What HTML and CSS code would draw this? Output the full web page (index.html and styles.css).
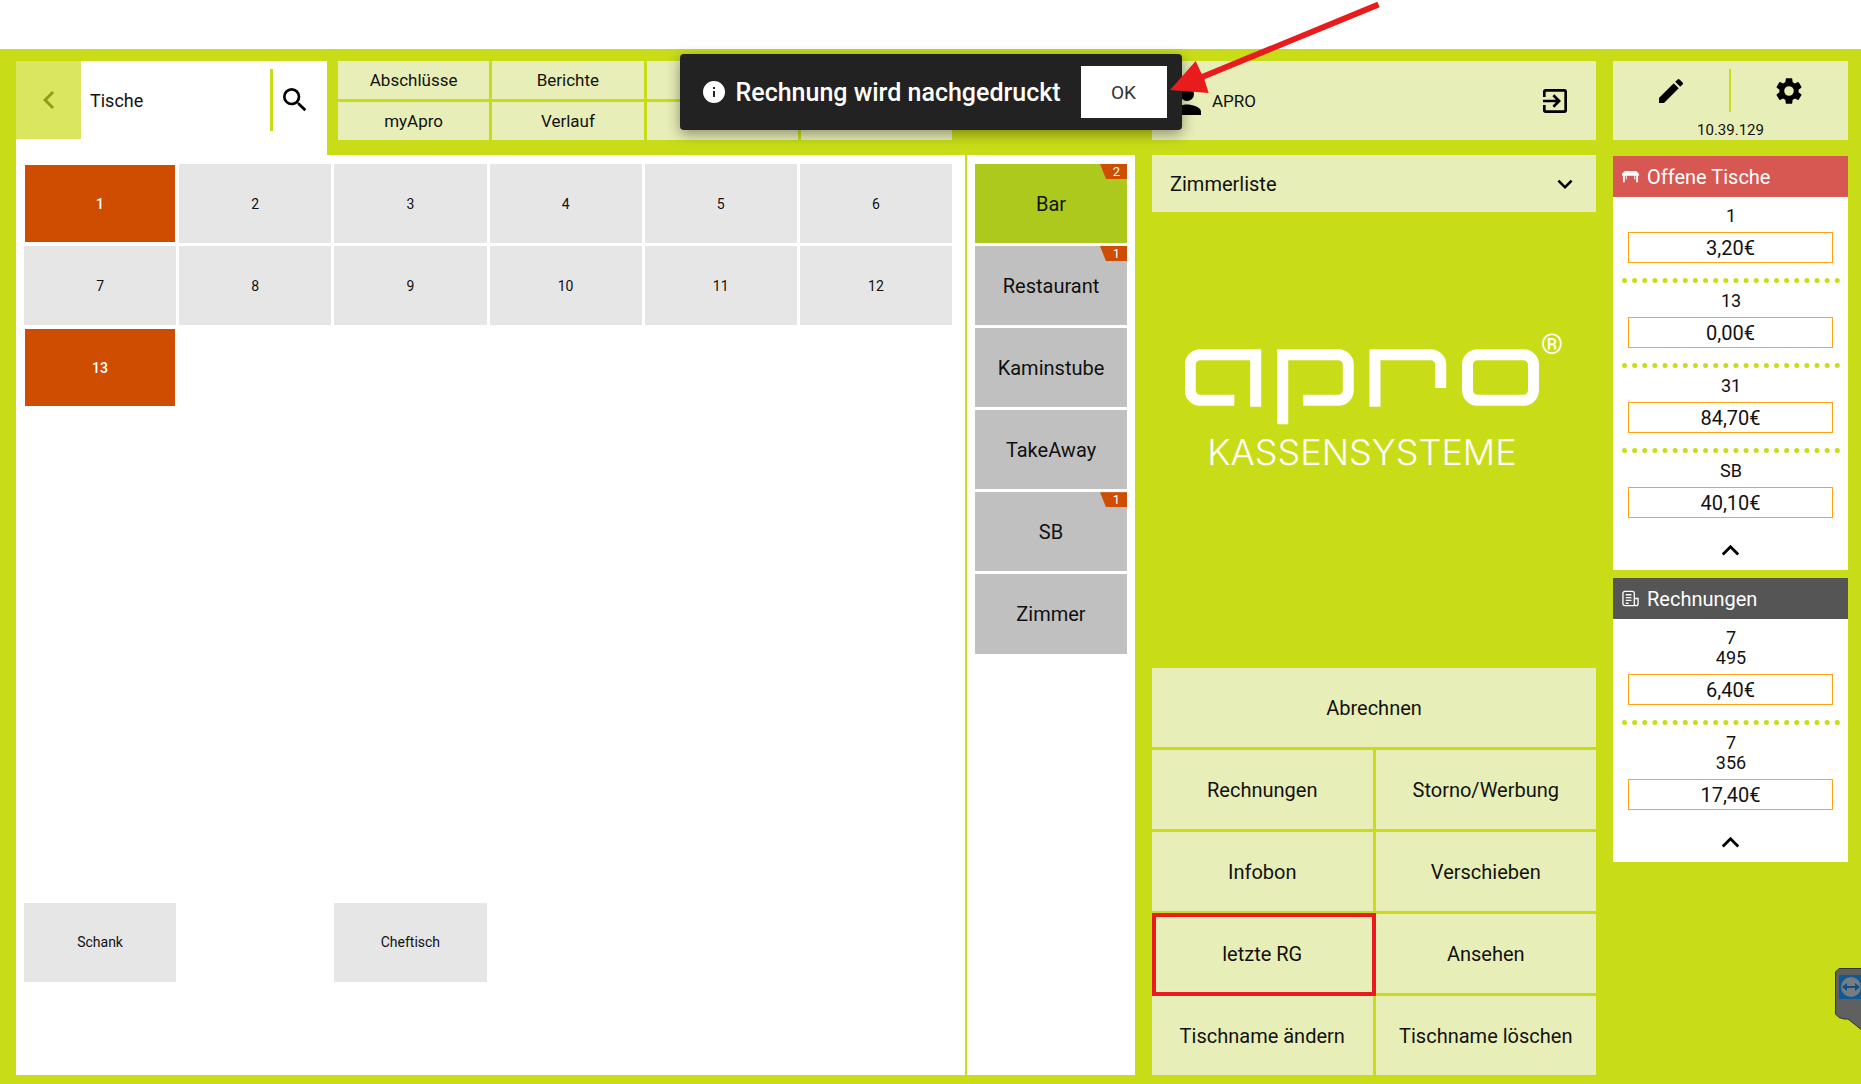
FILE: index.html
```html
<!DOCTYPE html>
<html lang="de">

<head>
    <meta charset="UTF-8">
    <meta name="viewport" content="width=device-width, initial-scale=1.0">
    <title>apro Kassensysteme</title>
    <link rel="stylesheet" href="styles.css">
</head>

<body>
    <div class="app">
        <!-- Tables and rooms -->
        <main class="left">
            <div class="topbar">
                <div class="search-bar">
                    <button class="back" aria-label="Zurück">
                        <svg viewBox="0 0 24 24"><path d="M15.4 7.4 14 6l-6 6 6 6 1.4-1.4L10.8 12z"/></svg>
                    </button>
                    <input type="text" value="Tische" aria-label="Suche">
                    <button class="search" aria-label="Suchen">
                        <svg viewBox="0 0 24 24"><path d="M15.5 14h-.79l-.28-.27A6.47 6.47 0 0 0 16 9.5 6.5 6.5 0 1 0 9.5 16c1.61 0 3.09-.59 4.23-1.57l.27.28v.79l5 4.99L20.49 19l-4.99-5zm-6 0a4.5 4.5 0 1 1 0-9 4.5 4.5 0 0 1 0 9z"/></svg>
                    </button>
                </div>
                <div class="menu">
                    <button>Abschlüsse</button>
                    <button>Berichte</button>
                    <button></button>
                    <button></button>
                    <button>myApro</button>
                    <button>Verlauf</button>
                    <button></button>
                    <button></button>
                </div>
            </div>

            <div class="panels">
                <div class="tables">
                    <button class="open">1</button>
                    <button>2</button>
                    <button>3</button>
                    <button>4</button>
                    <button>5</button>
                    <button>6</button>
                    <button>7</button>
                    <button>8</button>
                    <button>9</button>
                    <button>10</button>
                    <button>11</button>
                    <button>12</button>
                    <button class="open">13</button>
                    <button class="schank">Schank</button>
                    <button class="cheftisch">Cheftisch</button>
                </div>
                <div class="rooms">
                    <button class="active">Bar<span class="badge">2</span></button>
                    <button>Restaurant<span class="badge">1</span></button>
                    <button>Kaminstube</button>
                    <button>TakeAway</button>
                    <button>SB<span class="badge">1</span></button>
                    <button>Zimmer</button>
                </div>
            </div>
        </main>

        <!-- User and actions -->
        <section class="middle">
            <div class="user">
                <svg class="person" viewBox="0 0 24 24"><path d="M12 12a4 4 0 1 0 0-8 4 4 0 0 0 0 8zm0 2c-2.67 0-8 1.34-8 4v2h16v-2c0-2.66-5.33-4-8-4z"/></svg>
                <span>APRO</span>
                <button class="logout" aria-label="Abmelden">
                    <svg viewBox="0 0 24 24"><path d="M10.09 15.59 11.5 17l5-5-5-5-1.41 1.41L12.67 11H3v2h9.67zM19 3H5a2 2 0 0 0-2 2v4h2V5h14v14H5v-4H3v4a2 2 0 0 0 2 2h14a2 2 0 0 0 2-2V5a2 2 0 0 0-2-2z"/></svg>
                </button>
            </div>

            <div class="room-list">
                <select aria-label="Zimmerliste">
                    <option>Zimmerliste</option>
                </select>
                <svg viewBox="0 0 24 24"><path d="M16.59 8.59 12 13.17 7.41 8.59 6 10l6 6 6-6z"/></svg>
            </div>

            <svg class="logo" viewBox="0 -14 390 164" role="img" aria-label="apro Kassensysteme">
                <g fill="none" stroke="#fff" stroke-width="11">
                    <path d="M70.7 73.7V21.8H15.2a10 10 0 0 0-10 10V57.3a10 10 0 0 0 10 10H49.3"/>
                    <path d="M97.7 91.3V21.8H153.3a10 10 0 0 1 10 10V57.3a10 10 0 0 1-10 10H118.3"/>
                    <path d="M190 73.7V21.8H245.7a10 10 0 0 1 10 10V55"/>
                    <rect x="282.5" y="21.8" width="66" height="45.5" rx="10"/>
                </g>
                <text class="reg" x="367" y="21" text-anchor="middle">®</text>
                <text class="claim" x="177" y="132" text-anchor="middle">KASSENSYSTEME</text>
            </svg>

            <div class="actions">
                <button class="wide">Abrechnen</button>
                <button>Rechnungen</button>
                <button>Storno/Werbung</button>
                <button>Infobon</button>
                <button>Verschieben</button>
                <button class="marked">letzte RG</button>
                <button>Ansehen</button>
                <button>Tischname ändern</button>
                <button>Tischname löschen</button>
            </div>
        </section>

        <!-- Sidebar -->
        <aside class="sidebar">
            <div class="tools">
                <div class="tool-buttons">
                    <button aria-label="Bearbeiten">
                        <svg viewBox="0 0 24 24"><path d="M3 17.25V21h3.75L17.81 9.94l-3.75-3.75zM20.71 7.04a1 1 0 0 0 0-1.41l-2.34-2.34a1 1 0 0 0-1.41 0l-1.83 1.83 3.75 3.75z"/></svg>
                    </button>
                    <button aria-label="Einstellungen">
                        <svg viewBox="0 0 24 24"><path d="M19.14 12.94c.04-.3.06-.61.06-.94s-.02-.64-.07-.94l2.03-1.58a.49.49 0 0 0 .12-.61l-1.92-3.32a.49.49 0 0 0-.59-.22l-2.39.96a7 7 0 0 0-1.62-.94l-.36-2.54a.48.48 0 0 0-.48-.41h-3.84a.47.47 0 0 0-.47.41l-.36 2.54c-.59.24-1.13.57-1.62.94l-2.39-.96a.48.48 0 0 0-.59.22L2.74 8.87a.47.47 0 0 0 .12.61l2.03 1.58c-.05.3-.09.63-.09.94s.02.64.07.94l-2.03 1.58a.49.49 0 0 0-.12.61l1.92 3.32c.12.22.37.29.59.22l2.39-.96c.5.38 1.03.7 1.62.94l.36 2.54c.05.24.24.41.48.41h3.84c.24 0 .44-.17.47-.41l.36-2.54a6.8 6.8 0 0 0 1.62-.94l2.39.96c.22.08.47 0 .59-.22l1.92-3.32a.47.47 0 0 0-.12-.61zM12 15.6a3.6 3.6 0 1 1 0-7.2 3.6 3.6 0 0 1 0 7.2z"/></svg>
                    </button>
                </div>
                <span class="version">10.39.129</span>
            </div>

            <div class="card">
                <h2 class="red">
                    <svg viewBox="0 0 18 14"><path d="M3 1h12l3 3v2H0V4z"/><path d="M1 5h2v8H1zM15 5h2v8h-2zM4 5h1v5H4zM13 5h1v5h-1z"/></svg>
                    Offene Tische
                </h2>
                <ul>
                    <li><span>1</span><button>3,20€</button></li>
                    <li><span>13</span><button>0,00€</button></li>
                    <li><span>31</span><button>84,70€</button></li>
                    <li><span>SB</span><button>40,10€</button></li>
                </ul>
                <button class="collapse" aria-label="Einklappen">
                    <svg viewBox="0 0 24 24"><path d="m12 8-6 6 1.41 1.41L12 10.83l4.59 4.58L18 14z"/></svg>
                </button>
            </div>

            <div class="card">
                <h2 class="grey">
                    <svg viewBox="0 0 18 18"><path d="M13 16.5H3a2 2 0 0 1-2-2v-11a2 2 0 0 1 2-2h8a2 2 0 0 1 2 2v11a2 2 0 0 0 4 0V9h-4M4 5h6M4 8h6M4 11h6M4 14h3" fill="none" stroke="#fff" stroke-width="1.4"/></svg>
                    Rechnungen
                </h2>
                <ul>
                    <li><span>7</span><span>495</span><button>6,40€</button></li>
                    <li><span>7</span><span>356</span><button>17,40€</button></li>
                </ul>
                <button class="collapse" aria-label="Einklappen">
                    <svg viewBox="0 0 24 24"><path d="m12 8-6 6 1.41 1.41L12 10.83l4.59 4.58L18 14z"/></svg>
                </button>
            </div>
        </aside>
    </div>

    <!-- Toast -->
    <div class="toast" role="alert">
        <svg viewBox="0 0 24 24"><path d="M12 1a11 11 0 1 0 0 22 11 11 0 0 0 0-22zm1 16h-2v-6h2zm0-8h-2V7h2z"/></svg>
        <span>Rechnung wird nachgedruckt</span>
        <button>OK</button>
        <svg class="arrow" viewBox="0 0 214 96"><path d="M2 90 27.7 61l6 13L209.3 1.7l2.4 5.6L36.3 79.3 40.7 93z"/></svg>
    </div>

    <!-- Remote support tab -->
    <svg class="remote-tab" viewBox="0 0 26 62">
        <path d="M4 .5h24V63L13 51H9L4 49.5.5 46V4z" fill="#606060" stroke="#333"/>
        <path d="M4 7h22v24H4z" fill="#0d5a94"/>
        <circle cx="16" cy="19" r="10" fill="#777c80"/>
        <path d="m7 19 5-4v3h8v-3l5 4-5 4v-3h-8v3z" fill="#0d4f86"/>
    </svg>
</body>

</html>
```

FILE: styles.css
```css
* {
    box-sizing: border-box;
}

body {
    margin: 0;
    padding-top: 49px;
    background-color: #ffffff;
    color: #111111;
    font-family: Roboto, "Liberation Sans", sans-serif;
    font-size: 18px;
    position: relative;
}

button,
input,
select {
    font: inherit;
    color: inherit;
    border: none;
    border-radius: 0;
    padding: 0;
    margin: 0;
}

button {
    background: none;
    cursor: pointer;
}

svg {
    display: block;
}

.app {
    display: grid;
    grid-template-columns: 1fr 444px 235px;
    gap: 17px;
    min-height: calc(100vh - 49px);
    padding: 12px 13px 9px 16px;
    background-color: #c8dd18;
}
/* Tables and rooms */

.left {
    display: flex;
    flex-direction: column;
}

.topbar {
    display: flex;
    gap: 11px;
    height: 94px;
    padding-right: 183px;
}

.search-bar {
    display: flex;
    width: 311px;
    padding-bottom: 16px;
    background-color: #ffffff;
}

.search-bar input {
    flex: 1;
    min-width: 0;
    padding-left: 9px;
    background: none;
}

.back {
    display: flex;
    justify-content: center;
    align-items: center;
    width: 65px;
    background-color: #dae65f;
}

.back svg {
    width: 36px;
    height: 36px;
    fill: #8f9f14;
}

.search {
    margin: 8px 0;
    padding: 0 16px 0 6px;
    border-left: 3px solid #c8dd18;
}

.search svg {
    width: 32px;
    height: 32px;
}

.menu {
    flex: 1;
    display: grid;
    grid-template-columns: repeat(4, 1fr);
    grid-template-rows: repeat(2, 38px);
    gap: 3px;
}

.menu button,
.actions button {
    background-color: #e8eeb7;
}

.menu button {
    font-size: 17px;
}

.panels {
    flex: 1;
    display: grid;
    grid-template-columns: 1fr 168px;
    gap: 2px;
}

.tables,
.rooms {
    display: grid;
    grid-template-rows: repeat(11, 1fr);
    gap: 3px;
    background-color: #ffffff;
}

.tables {
    grid-template-columns: repeat(6, 1fr);
    padding: 9px 13px 11px 8px;
}

.tables button {
    background-color: #e6e6e6;
    font-size: 14px;
}

.tables .open {
    margin: 1px;
    background-color: #cf4d00;
    color: #ffffff;
    font-weight: 500;
}

.tables .schank {
    grid-area: 10 / 1;
}

.tables .cheftisch {
    grid-area: 10 / 3;
}

.rooms {
    padding: 9px 8px 11px;
}

.rooms button {
    position: relative;
    background-color: #c0c0c0;
    font-size: 20px;
}

.rooms .active {
    background-color: #adc91d;
}

.badge {
    position: absolute;
    top: 0;
    right: 0;
    width: 27px;
    padding-left: 6px;
    background-color: #cf4d00;
    clip-path: polygon(0 0, 100% 0, 100% 100%, 6px 100%);
    color: #ffffff;
    font-size: 13px;
    line-height: 15px;
}
/* User and actions */

.middle {
    display: flex;
    flex-direction: column;
}

.user {
    display: flex;
    align-items: center;
    gap: 4px;
    height: 79px;
    padding: 0 25px 0 14px;
    background-color: #e8eeb7;
    font-size: 17px;
}

.person {
    width: 42px;
    height: 42px;
}

.logout {
    margin-left: auto;
}

.logout svg {
    width: 32px;
    height: 32px;
}

.room-list {
    position: relative;
    margin-top: 15px;
    font-size: 20px;
}

.room-list select {
    display: block;
    width: 100%;
    height: 57px;
    padding-left: 18px;
    appearance: none;
    background-color: #e8eeb7;
}

.room-list svg {
    position: absolute;
    top: 14px;
    right: 16px;
    width: 30px;
    height: 30px;
    pointer-events: none;
}

.logo {
    width: 390px;
    margin: 107px 21px 0 33px;
    fill: #ffffff;
}

.logo .reg {
    font-size: 28px;
}

.logo .claim {
    font-family: Inter, sans-serif;
    font-size: 36px;
    font-weight: 300;
}

.actions {
    display: grid;
    grid-template-columns: repeat(2, 1fr);
    grid-auto-rows: 79px;
    gap: 3px;
    margin-top: auto;
    font-size: 20px;
}

.actions .wide {
    grid-column: span 2;
}

.actions .marked {
    position: relative;
}

.marked::after {
    content: "";
    position: absolute;
    inset: -1px -3px -3px 0;
    border: 4px solid #e81c1c;
}
/* Sidebar */

.tools {
    display: flex;
    flex-direction: column;
    align-items: center;
    height: 79px;
    margin-bottom: 16px;
    padding-top: 8px;
    background-color: #e8eeb7;
}

.tool-buttons {
    display: grid;
    grid-template-columns: 1fr 1fr;
    width: 100%;
    height: 44px;
}

.tool-buttons button {
    display: flex;
    justify-content: center;
    align-items: center;
}

.tool-buttons button:first-child {
    border-right: 2px solid #c8dd18;
}

.tool-buttons svg {
    width: 32px;
    height: 32px;
}

.version {
    margin-top: 8px;
    font-size: 15px;
    line-height: 20px;
}

.card {
    margin-bottom: 8px;
    background-color: #ffffff;
}

.card h2 {
    display: flex;
    align-items: center;
    gap: 8px;
    height: 41px;
    margin: 0;
    padding-left: 9px;
    color: #ffffff;
    font-size: 20px;
    font-weight: 400;
}

.card h2 svg {
    width: 17px;
}

.card .red {
    background-color: #d75852;
}

.card .red svg {
    fill: #ffffff;
}

.card .grey {
    background-color: #555555;
}

.card ul {
    margin: 0;
    padding: 9px 8px 0 9px;
    list-style: none;
}

.card li {
    text-align: center;
}

.card li + li {
    margin-top: 15px;
    padding-top: 8px;
    border-top: 5px dotted #c8dd18;
}

.card li span {
    display: block;
    line-height: 20px;
}

.card li button {
    display: block;
    width: calc(100% - 13px);
    height: 31px;
    margin: 6px 0 0 6px;
    border: 1px solid #ffa312;
    font-size: 20px;
}

.collapse {
    display: flex;
    justify-content: center;
    width: 100%;
    height: 52px;
    padding-top: 15px;
}

.collapse svg {
    width: 35px;
    height: 35px;
}
/* Toast */

.toast {
    position: absolute;
    top: 54px;
    left: 50%;
    transform: translateX(-50%);
    display: flex;
    align-items: center;
    width: 502px;
    height: 76px;
    padding: 0 15px 0 22px;
    background-color: #222222;
    border-radius: 4px;
    box-shadow: 0 4px 14px rgba(0, 0, 0, 0.4);
    color: #ffffff;
    font-size: 25px;
    font-weight: 500;
    white-space: nowrap;
}

.toast svg {
    width: 24px;
    height: 24px;
    margin-right: 10px;
    fill: #ffffff;
}

.toast button {
    width: 86px;
    height: 52px;
    margin-left: auto;
    background-color: #ffffff;
    color: #333333;
    font-size: 19px;
    font-weight: 400;
}

.toast .arrow {
    position: absolute;
    bottom: 34px;
    left: 488px;
    width: 214px;
    height: 96px;
    margin: 0;
    fill: #e81c1c;
}
/* Remote support tab */

.remote-tab {
    position: absolute;
    right: 0;
    bottom: 54px;
    width: 26px;
    height: 62px;
}
```
